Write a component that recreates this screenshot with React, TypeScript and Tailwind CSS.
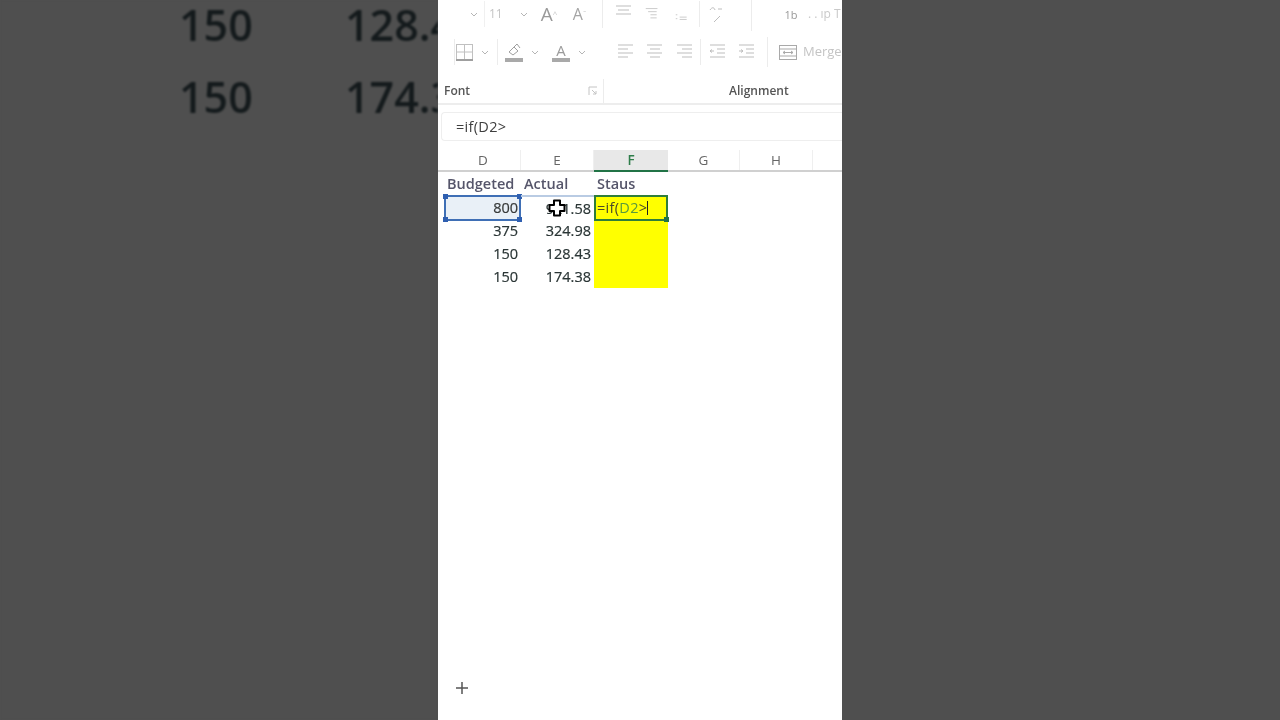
import React from "react";

const font = { fontFamily: '"Open Sans", "Noto Sans", sans-serif' };

function Chev({ w = 20, c = "#b5b5b5" }: { w?: number; c?: string }) {
  return (
    <span className="flex justify-center shrink-0" style={{ width: w }}>
      <svg width="8" height="5" viewBox="0 0 8 5" fill="none" stroke={c} strokeWidth="1">
        <path d="M1 1l3 3 3-3" />
      </svg>
    </span>
  );
}

function Lines({ w, kind }: { w: number; kind: "top" | "mid" | "bot" | "left" | "center" | "right" | "inL" | "inR" }) {
  const c = "#bdbdbd";
  const s = (d: string) => <path d={d} />;
  return (
    <span className="flex justify-center shrink-0" style={{ width: w }}>
      <svg width="18" height="18" viewBox="0 0 18 18" fill="none" stroke={c} strokeWidth="1">
        {kind === "top" && <>{s("M1 1h15")}{s("M3 5h11")}{s("M1 9h15")}</>}
        {kind === "mid" && <>{s("M1 2h15")}{s("M4 6h11")}{s("M7 10h8")}{s("M7 14h8")}</>}
        {kind === "bot" && <>{s("M1 10h2")}{s("M1 15h2")}{s("M6 13h9")}{s("M6 16h9")}</>}
        {kind === "left" && <>{s("M1 2h15")}{s("M1 6h10")}{s("M1 10h15")}{s("M1 14h10")}</>}
        {kind === "center" && <>{s("M1 2h15")}{s("M4 6h10")}{s("M1 10h15")}{s("M4 14h10")}</>}
        {kind === "right" && <>{s("M1 2h15")}{s("M6 6h10")}{s("M1 10h15")}{s("M6 14h10")}</>}
        {kind === "inL" && <>{s("M1 2h15")}{s("M8 6h8")}{s("M8 10h8")}{s("M1 14h15")}{s("M5 8H1M3 6.500L1 8l2 1.500")}</>}
        {kind === "inR" && <>{s("M1 2h15")}{s("M8 6h8")}{s("M8 10h8")}{s("M1 14h15")}{s("M1 8h4M3 6.500L5 8l-2 1.500")}</>}
      </svg>
    </span>
  );
}

function Ribbon() {
  return (
    <div className="h-[103px] flex flex-col shrink-0 overflow-hidden relative" style={font}>
      <div className="h-[28px] flex items-center">
        <span className="w-[26px] shrink-0" />
        <Chev />
        <span className="w-[5px] h-[26px] shrink-0 border-l border-[#f0f0f0]" />
        <span className="w-[25px] text-[12px] text-[#c4c4c4] shrink-0">11</span>
        <Chev w={20} />
        <span className="w-[30px] shrink-0 text-[19px] text-[#9a9a9a] leading-none text-center">
          A<sup className="text-[8px] text-[#c8c8c8]">^</sup>
        </span>
        <span className="w-[31px] shrink-0 text-[16px] text-[#a5a5a5] leading-none text-center">
          A<sup className="text-[8px] text-[#c8c8c8]">ˇ</sup>
        </span>
        <span className="w-[7px] shrink-0" />
        <span className="w-[1px] h-[28px] bg-[#ececec] shrink-0" />
        <Lines w={42} kind="top" />
        <Lines w={14} kind="mid" />
        <span className="w-[16px] shrink-0" />
        <Lines w={14} kind="bot" />
        <span className="w-[10px] shrink-0" />
        <span className="w-[1px] h-[26px] bg-[#ececec] shrink-0" />
        <span className="w-[33px] flex justify-center shrink-0">
          <svg width="18" height="18" viewBox="0 0 18 18" fill="none" stroke="#bdbdbd" strokeWidth="1">
            <path d="M2 5c2-3 4-3 5 0M10 4h4M12 11l-6 6" />
          </svg>
        </span>
        <span className="w-[18px] shrink-0" />
        <span className="w-[1px] h-[34px] bg-[#ececec] shrink-0" />
        <span className="w-[34px] flex justify-center shrink-0 text-[11px] leading-[9px] text-[#999] ml-[22px]">1b</span>
        <span className="text-[12px] text-[#c9c9c9] whitespace-nowrap">. . ıp T</span>
      </div>
      <div className="h-[28px] mt-[10px] flex items-center">
        <span className="w-[16px] shrink-0" />
        <span className="w-[1px] h-[26px] bg-[#ececec] shrink-0" />
        <span className="w-[18px] flex justify-center shrink-0">
          <svg width="17" height="17" viewBox="0 0 17 17" fill="none" stroke="#c0c0c0" strokeWidth="1">
            <rect x="0.500" y="0.500" width="16" height="15" />
            <path d="M8.500 1v14M1 8h15" />
            <path d="M0 16h17" strokeWidth="2" stroke="#9f9f9f" />
          </svg>
        </span>
        <span className="w-[6px] shrink-0" />
        <Chev w={12} />
        <span className="w-[6px] shrink-0" />
        <span className="w-[1px] h-[26px] bg-[#ececec] shrink-0" />
        <span className="w-[7px] shrink-0" />
        <span className="w-[18px] flex justify-center shrink-0">
          <svg width="18" height="19" viewBox="0 0 18 19" fill="none">
            <path d="M4 9l5-5 4 4-5 4z" stroke="#9f9f9f" />
            <path d="M9 4l3-3 3 4" stroke="#9f9f9f" />
            <rect x="0" y="15" width="18" height="4" fill="#a9a9a9" />
          </svg>
        </span>
        <span className="w-[6px] shrink-0" />
        <Chev w={12} />
        <span className="w-[11px] shrink-0" />
        <span className="w-[18px] flex flex-col items-center shrink-0 text-[#9b9b9b]">
          <span className="text-[15px] leading-[15px]">A</span>
          <span className="w-[18px] h-[4px] bg-[#a9a9a9]" />
        </span>
        <span className="w-[6px] shrink-0" />
        <Chev w={12} />
        <span className="w-[7px] shrink-0" />
        <span className="w-[21px] shrink-0" />
        <Lines w={19} kind="left" />
        <span className="w-[10px] shrink-0" />
        <Lines w={19} kind="center" />
        <span className="w-[11px] shrink-0" />
        <Lines w={19} kind="right" />
        <span className="w-[6px] shrink-0" />
        <span className="w-[1px] h-[26px] bg-[#ececec] shrink-0" />
        <span className="w-[7px] shrink-0" />
        <Lines w={19} kind="inL" />
        <span className="w-[10px] shrink-0" />
        <Lines w={19} kind="inR" />
        <span className="w-[11px] shrink-0" />
        <span className="w-[1px] h-[30px] bg-[#ececec] shrink-0" />
        <span className="w-[10px] shrink-0" />
        <span className="w-[20px] flex justify-center shrink-0">
          <svg width="18" height="18" viewBox="0 0 18 18" fill="none" stroke="#a9a9a9" strokeWidth="1">
            <rect x="0.500" y="2.500" width="17" height="14" />
            <path d="M1 6h16M1 13h16M4 9.500h10M4 9.500l2-1.500M4 9.500l2 1.500M14 9.500l-2-1.500M14 9.500l-2 1.500" />
          </svg>
        </span>
        <span className="ml-[5px] text-[13px] text-[#c4c4c4] whitespace-nowrap">Merge</span>
      </div>
      <div className="flex-1 flex items-center pt-[12px]">
        <span className="ml-[6px] text-[12px] font-semibold text-[#555]">Font</span>
        <svg className="ml-[118px]" width="10" height="10" viewBox="0 0 10 10" fill="none" stroke="#c4c4c4">
          <path d="M1 9V1h8M4 4l4 4M8 5v3H5" />
        </svg>
        <span className="w-[1px] h-[24px] bg-[#ececec] ml-[5px]" />
        <span className="ml-[125px] text-[12px] font-semibold text-[#555]">Alignment</span>
      </div>
    </div>
  );
}

function FormulaBar() {
  return (
    <div className="h-[47px] shrink-0 border-t-2 border-[#ededed] pt-[7px] pl-[3px]" style={font}>
      <div className="h-[29px] border border-[#eeeeee] rounded-l-[4px] flex items-center pl-[14px] text-[14.500px] tracking-[0.3px] text-[#3f3f3f] border-r-0">
        =if(D2&gt;
      </div>
    </div>
  );
}

const colClass = "grid grid-cols-[83px_73px_74px_72px_73px_72px_7px]";

function HeaderRow() {
  const cols = ["D", "E", "F", "G", "H"];
  return (
    <div className={`${colClass} h-[22px] border-b-2 border-[#d0d0d0] shrink-0 text-[13.500px] text-[#666]`} style={font}>
      {cols.map((c) => (
        <div
          key={c}
          className={
            c === "F"
              ? "flex items-center justify-center bg-[#e8e8e8] text-[#2e7d4a] font-semibold -mb-[2px] border-b-2 border-[#217346]"
              : c === "D"
                ? "flex items-center justify-center pl-[8px] border-r border-[#efefef]"
                : "flex items-center justify-center border-r border-[#efefef]"
          }
        >
          {c}
        </div>
      ))}
      <div />
    </div>
  );
}

function Sheet() {
  const stroke = "[-webkit-text-stroke:0.2px_#2a3535]";
  const num = `flex items-center justify-end pr-[3px] pt-[1px] text-[14.500px] text-[#2a3535] ${stroke}`;
  const rows = [
    ["375", "324.98"],
    ["150", "128.43"],
    ["150", "174.38"],
  ];
  return (
    <div className="shrink-0" style={font}>
      <div className={`${colClass} h-[23px] text-[14.500px] font-semibold text-[#55556a]`}>
        <div className="pl-[9px] pt-[1px] flex items-center whitespace-nowrap">Budgeted</div>
        <div className="pl-[3px] pt-[1px] flex items-center">Actual</div>
        <div className="pl-[3px] pt-[1px] flex items-center">Staus</div>
      </div>
      <div className={`${colClass} h-[24px]`}>
        <div className={`relative flex items-center justify-end pr-[1px] text-[14.500px] text-[#3a3a3a] bg-[#e9f0f7] ml-[6px] border-2 border-[#3f6fb5] ${stroke}`}>
          800
          <span className="absolute -left-[3px] -top-[3px] w-[5px] h-[5px] bg-[#2f5fb0]" />
          <span className="absolute -right-[3px] -top-[3px] w-[5px] h-[5px] bg-[#2f5fb0]" />
          <span className="absolute -left-[3px] -bottom-[3px] w-[5px] h-[5px] bg-[#2f5fb0]" />
          <span className="absolute -right-[3px] -bottom-[3px] w-[5px] h-[5px] bg-[#2f5fb0]" />
        </div>
        <div className={`${num} relative border-t-2 border-[#b9cbe3] !pt-0`}>
          921.58
          <svg className="absolute left-[26px] top-[1px]" width="20" height="20" viewBox="0 0 20 20">
            <path
              d="M7 2.500h6v4.500h4.500v6H13v4.500H7V13H2.500V7H7z"
              fill="#fff"
              stroke="#000"
              strokeWidth="2"
              strokeLinejoin="round"
            />
          </svg>
        </div>
        <div className="relative bg-[#ffff00] border-2 border-[#2f7d3a] flex items-center pl-[1px] text-[14.500px] tracking-[0.3px] text-[#4a4a2a] whitespace-nowrap">
          <span>=if(</span>
          <span className="text-[#5b9a3d]">D2</span>
          <span>&gt;</span>
          <span className="w-[1px] h-[14px] bg-[#222]" />
          <span className="absolute -right-[3px] -bottom-[3px] w-[5px] h-[5px] bg-[#217346]" />
        </div>
      </div>
      {rows.map(([a, b], i) => (
        <div key={i} className={`${colClass} h-[23px]`}>
          <div className={num}>{a}</div>
          <div className={num}>{b}</div>
          <div className="bg-[#ffff00]" />
        </div>
      ))}
    </div>
  );
}

function SideText() {
  return (
    <div
      className="w-[438px] h-full shrink-0 bg-[#4f4f4f] overflow-hidden text-[43px] font-semibold leading-[72px] text-[#141a1c] blur-[1.2px]"
      style={font}
    >
      <div className="flex -mt-[11px] pl-[179px] whitespace-nowrap">
        <span className="w-[166px] shrink-0">150</span>
        <span className="shrink-0">128.43</span>
      </div>
      <div className="flex pl-[179px] whitespace-nowrap">
        <span className="w-[166px] shrink-0">150</span>
        <span className="shrink-0">174.38</span>
      </div>
    </div>
  );
}

export default function App() {
  return (
    <div className="w-[1280px] h-[720px] flex overflow-hidden bg-[#4f4f4f]">
      <SideText />
      <div className="w-[404px] h-full shrink-0 bg-white flex flex-col blur-[0.4px] overflow-hidden">
        <Ribbon />
        <FormulaBar />
        <HeaderRow />
        <Sheet />
        <div className="flex-1 flex items-end pl-[17px] pb-[25px]">
          <svg width="14" height="14" viewBox="0 0 14 14" stroke="#555" strokeWidth="1.500">
            <path d="M7 1v12M1 7h12" />
          </svg>
        </div>
      </div>
      <div className="flex-1 bg-[#4f4f4f]" />
    </div>
  );
}
